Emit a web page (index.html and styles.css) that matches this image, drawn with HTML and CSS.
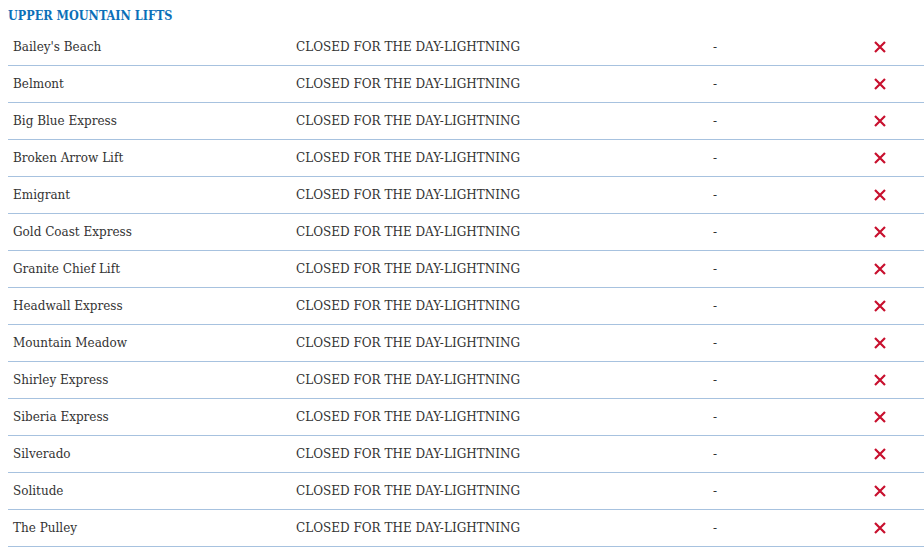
FILE: index.html
```html
<!DOCTYPE html>
<html>
<head>
<meta charset="utf-8">
<link rel="stylesheet" href="styles.css">
</head>
<body>
<h2 class="title">UPPER MOUNTAIN LIFTS</h2>
<div class="table">
  <div class="row"><span class="name">Bailey's Beach</span><span class="status">CLOSED FOR THE DAY-LIGHTNING</span><span class="dash">-</span><span class="icon"><svg viewBox="0 0 14 14" width="14" height="14"><path d="M2 2L12 12M12 2L2 12" /></svg></span></div>
  <div class="row"><span class="name">Belmont</span><span class="status">CLOSED FOR THE DAY-LIGHTNING</span><span class="dash">-</span><span class="icon"><svg viewBox="0 0 14 14" width="14" height="14"><path d="M2 2L12 12M12 2L2 12" /></svg></span></div>
  <div class="row"><span class="name">Big Blue Express</span><span class="status">CLOSED FOR THE DAY-LIGHTNING</span><span class="dash">-</span><span class="icon"><svg viewBox="0 0 14 14" width="14" height="14"><path d="M2 2L12 12M12 2L2 12" /></svg></span></div>
  <div class="row"><span class="name">Broken Arrow Lift</span><span class="status">CLOSED FOR THE DAY-LIGHTNING</span><span class="dash">-</span><span class="icon"><svg viewBox="0 0 14 14" width="14" height="14"><path d="M2 2L12 12M12 2L2 12" /></svg></span></div>
  <div class="row"><span class="name">Emigrant</span><span class="status">CLOSED FOR THE DAY-LIGHTNING</span><span class="dash">-</span><span class="icon"><svg viewBox="0 0 14 14" width="14" height="14"><path d="M2 2L12 12M12 2L2 12" /></svg></span></div>
  <div class="row"><span class="name">Gold Coast Express</span><span class="status">CLOSED FOR THE DAY-LIGHTNING</span><span class="dash">-</span><span class="icon"><svg viewBox="0 0 14 14" width="14" height="14"><path d="M2 2L12 12M12 2L2 12" /></svg></span></div>
  <div class="row"><span class="name">Granite Chief Lift</span><span class="status">CLOSED FOR THE DAY-LIGHTNING</span><span class="dash">-</span><span class="icon"><svg viewBox="0 0 14 14" width="14" height="14"><path d="M2 2L12 12M12 2L2 12" /></svg></span></div>
  <div class="row"><span class="name">Headwall Express</span><span class="status">CLOSED FOR THE DAY-LIGHTNING</span><span class="dash">-</span><span class="icon"><svg viewBox="0 0 14 14" width="14" height="14"><path d="M2 2L12 12M12 2L2 12" /></svg></span></div>
  <div class="row"><span class="name">Mountain Meadow</span><span class="status">CLOSED FOR THE DAY-LIGHTNING</span><span class="dash">-</span><span class="icon"><svg viewBox="0 0 14 14" width="14" height="14"><path d="M2 2L12 12M12 2L2 12" /></svg></span></div>
  <div class="row"><span class="name">Shirley Express</span><span class="status">CLOSED FOR THE DAY-LIGHTNING</span><span class="dash">-</span><span class="icon"><svg viewBox="0 0 14 14" width="14" height="14"><path d="M2 2L12 12M12 2L2 12" /></svg></span></div>
  <div class="row"><span class="name">Siberia Express</span><span class="status">CLOSED FOR THE DAY-LIGHTNING</span><span class="dash">-</span><span class="icon"><svg viewBox="0 0 14 14" width="14" height="14"><path d="M2 2L12 12M12 2L2 12" /></svg></span></div>
  <div class="row"><span class="name">Silverado</span><span class="status">CLOSED FOR THE DAY-LIGHTNING</span><span class="dash">-</span><span class="icon"><svg viewBox="0 0 14 14" width="14" height="14"><path d="M2 2L12 12M12 2L2 12" /></svg></span></div>
  <div class="row"><span class="name">Solitude</span><span class="status">CLOSED FOR THE DAY-LIGHTNING</span><span class="dash">-</span><span class="icon"><svg viewBox="0 0 14 14" width="14" height="14"><path d="M2 2L12 12M12 2L2 12" /></svg></span></div>
  <div class="row"><span class="name">The Pulley</span><span class="status">CLOSED FOR THE DAY-LIGHTNING</span><span class="dash">-</span><span class="icon"><svg viewBox="0 0 14 14" width="14" height="14"><path d="M2 2L12 12M12 2L2 12" /></svg></span></div>
</div>
</body>
</html>
```
FILE: styles.css
```css
html, body { background: #fff; }
body {
  margin: 0 0 0 8px;
  font-family: "DejaVu Serif", serif;
  color: #333333;
}
.title {
  margin: 0;
  height: 28px;
  padding-top: 9px;
  box-sizing: border-box;
  font-family: "DejaVu Serif Condensed", "DejaVu Serif", serif;
  font-stretch: condensed;
  font-size: 12.5px;
  font-weight: bold;
  line-height: 14px;
  color: #0b6fb8;
}
.table { display: flex; flex-direction: column; }
.row {
  display: grid;
  grid-template-columns: 283px 417px 160px 1fr;
  align-items: center;
  height: 37px;
  box-sizing: border-box;
  border-bottom: 1px solid #a7c2df;
  font-size: 12px;
}
.row:first-child { height: 38px; }
.name { padding-left: 5px; }
.status { padding-left: 5px; }
.dash { padding-left: 5px; }
.icon { display: flex; padding-left: 5px; }
.icon svg { stroke: #c8102e; stroke-width: 2.2; fill: none; }
```
